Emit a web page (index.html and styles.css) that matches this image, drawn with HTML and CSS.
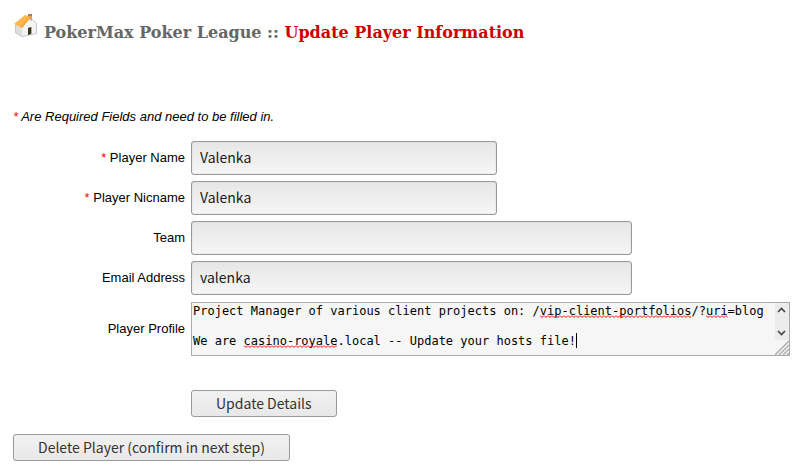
FILE: index.html
```html
<!DOCTYPE html>
<html lang="en">
<head>
<meta charset="utf-8">
<title>PokerMax Poker League</title>
<link rel="stylesheet" href="styles.css">
</head>
<body>
<header class="header">
  <svg class="logo" viewBox="0 0 25 25" aria-hidden="true">
    <path d="M2 11 9 15v9l-7-4z" fill="#dedede"/>
    <path d="M9 14 17 5l7 6v9L9 24z" fill="#f4f4f4"/>
    <path d="M2.500 12v7.500L9 23.500 23.500 20.500V11" fill="none" stroke="#c8c8c8"/>
    <path d="M15 2h4v6l-4-3z" fill="#c39a70"/>
    <path d="M15 1h4v2h-4z" fill="#a67c52"/>
    <path d="M1 11 12 2l6 2-9 11z" fill="#ffb84f"/>
    <path d="M7 14 16 3l2 1-9 11z" fill="#fba83c"/>
    <path d="m18 5 6 6" stroke="#cdc6bd" fill="none"/>
    <path d="M15 15l3-1v7l-3 1z" fill="#39351f"/>
    <path d="M18 14h1v7h-1z" fill="#b5af9d"/>
  </svg>
  <h1 class="title">PokerMax Poker League :: <span class="title-page">Update Player Information</span></h1>
</header>
<main>
  <p class="note"><span class="required">*</span> Are Required Fields and need to be filled in.</p>
  <form class="form">
    <label class="label" for="name"><span class="required">*</span> Player Name</label>
    <input class="input input-short" id="name" type="text" value="Valenka">
    <label class="label" for="nick"><span class="required">*</span> Player Nicname</label>
    <input class="input input-short" id="nick" type="text" value="Valenka">
    <label class="label" for="team">Team</label>
    <input class="input" id="team" type="text">
    <label class="label" for="email">Email Address</label>
    <input class="input" id="email" type="text" value="valenka">
    <label class="label" for="profile">Player Profile</label>
    <div class="editor">
      <textarea class="profile" id="profile" spellcheck="false">Project Manager of various client projects on: /vip-client-portfolios/?uri=blog

We are casino-royale.local -- Update your hosts file!</textarea>
      <svg class="marks" aria-hidden="true">
        <defs>
          <pattern id="wave" width="4" height="3" patternUnits="userSpaceOnUse">
            <path d="M-1 0 0 .5 2 2.500 4 .5 5 0" fill="none" stroke="#f00"/>
          </pattern>
        </defs>
      </svg>
      <svg class="wave wave-path" aria-hidden="true"><rect width="100%" height="3" fill="url(#wave)"/></svg>
      <svg class="wave wave-uri" aria-hidden="true"><rect width="100%" height="3" fill="url(#wave)"/></svg>
      <svg class="wave wave-host" aria-hidden="true"><rect width="100%" height="3" fill="url(#wave)"/></svg>
      <span class="caret"></span>
      <svg class="scroll" viewBox="0 0 15 52" aria-hidden="true">
        <path d="M0 0h14v37H0z" fill="#ececec"/>
        <path d="m3 9 3.500-3.500L10 9M3 28l3.500 3.500L10 28" fill="none" stroke="#444" stroke-width="1.600"/>
        <path d="M0 52 14 38M4 52 14 42M8 52l6-6M12 52l2-2" fill="none" stroke="#aaa" stroke-width="1.400"/>
      </svg>
    </div>
    <button class="button button-update" type="button">Update Details</button>
  </form>
  <button class="button button-delete" type="button">Delete Player (confirm in next step)</button>
</main>
</body>
</html>
```
FILE: styles.css
```css
* { box-sizing: border-box; }
body {
  margin: 0;
  padding: 13px;
  background: #fff;
  color: #000;
  font: 13px/16px "Liberation Sans", Arial, sans-serif;
}
.header {
  display: flex;
  align-items: flex-start;
  gap: 6px;
}
.logo { width: 25px; height: 25px; flex: none; }
.title {
  margin: 9px 0 0;
  color: #666;
  font: bold 16px/22px "DejaVu Serif", serif;
}
.title-page { color: #c00; }
.note { margin: 65px 0 16px; font-style: italic; }
.required { color: #f00; }
.form {
  display: grid;
  grid-template-columns: 172px 1fr;
  gap: 6px;
  align-items: center;
}
.label { text-align: right; }
.input {
  width: 441px;
  max-width: 100%;
  height: 34px;
  padding: 0 8px 2px;
  border: 1px solid #999;
  border-radius: 3px;
  background: linear-gradient(#e6e6e6, #f6f6f6);
  box-shadow: inset 0 0 1px #aaa;
  color: #1a1a1a;
  font: 14px "Noto Sans CJK SC", sans-serif;
}
.input-short { width: 306px; }
.editor {
  position: relative;
  max-width: 599px;
  margin-top: 1px;
  font: 12px/15px "DejaVu Sans Mono", monospace;
}
.profile {
  display: block;
  width: 100%;
  height: 54px;
  padding: 1px 1px 0;
  border: 1px solid #aaa;
  border-radius: 0;
  background: #f6f6f6;
  color: #000;
  font: inherit;
  resize: none;
  overflow: hidden;
}
.marks { position: absolute; width: 0; height: 0; }
.wave { position: absolute; height: 3px; }
.wave-path { left: calc(2px + 48ch); top: 13px; width: 21ch; }
.wave-uri { left: calc(2px + 71ch); top: 13px; width: 3ch; }
.wave-host { left: calc(2px + 7ch); top: 43px; width: 13ch; }
.caret {
  position: absolute;
  left: calc(2px + 53ch);
  top: 31px;
  width: 1px;
  height: 15px;
  background: #000;
}
.scroll { position: absolute; right: 0; top: 1px; width: 15px; height: 52px; }
.button {
  height: 27px;
  padding: 0 24px;
  border: 1px solid #999;
  border-radius: 3px;
  background: linear-gradient(#f2f2f2, #e8e8e8);
  color: #333;
  font: 14px/25px "Noto Sans CJK SC", sans-serif;
}
.button-update { grid-column: 2; justify-self: start; margin-top: 28px; }
.button-delete { margin-top: 17px; }
```
